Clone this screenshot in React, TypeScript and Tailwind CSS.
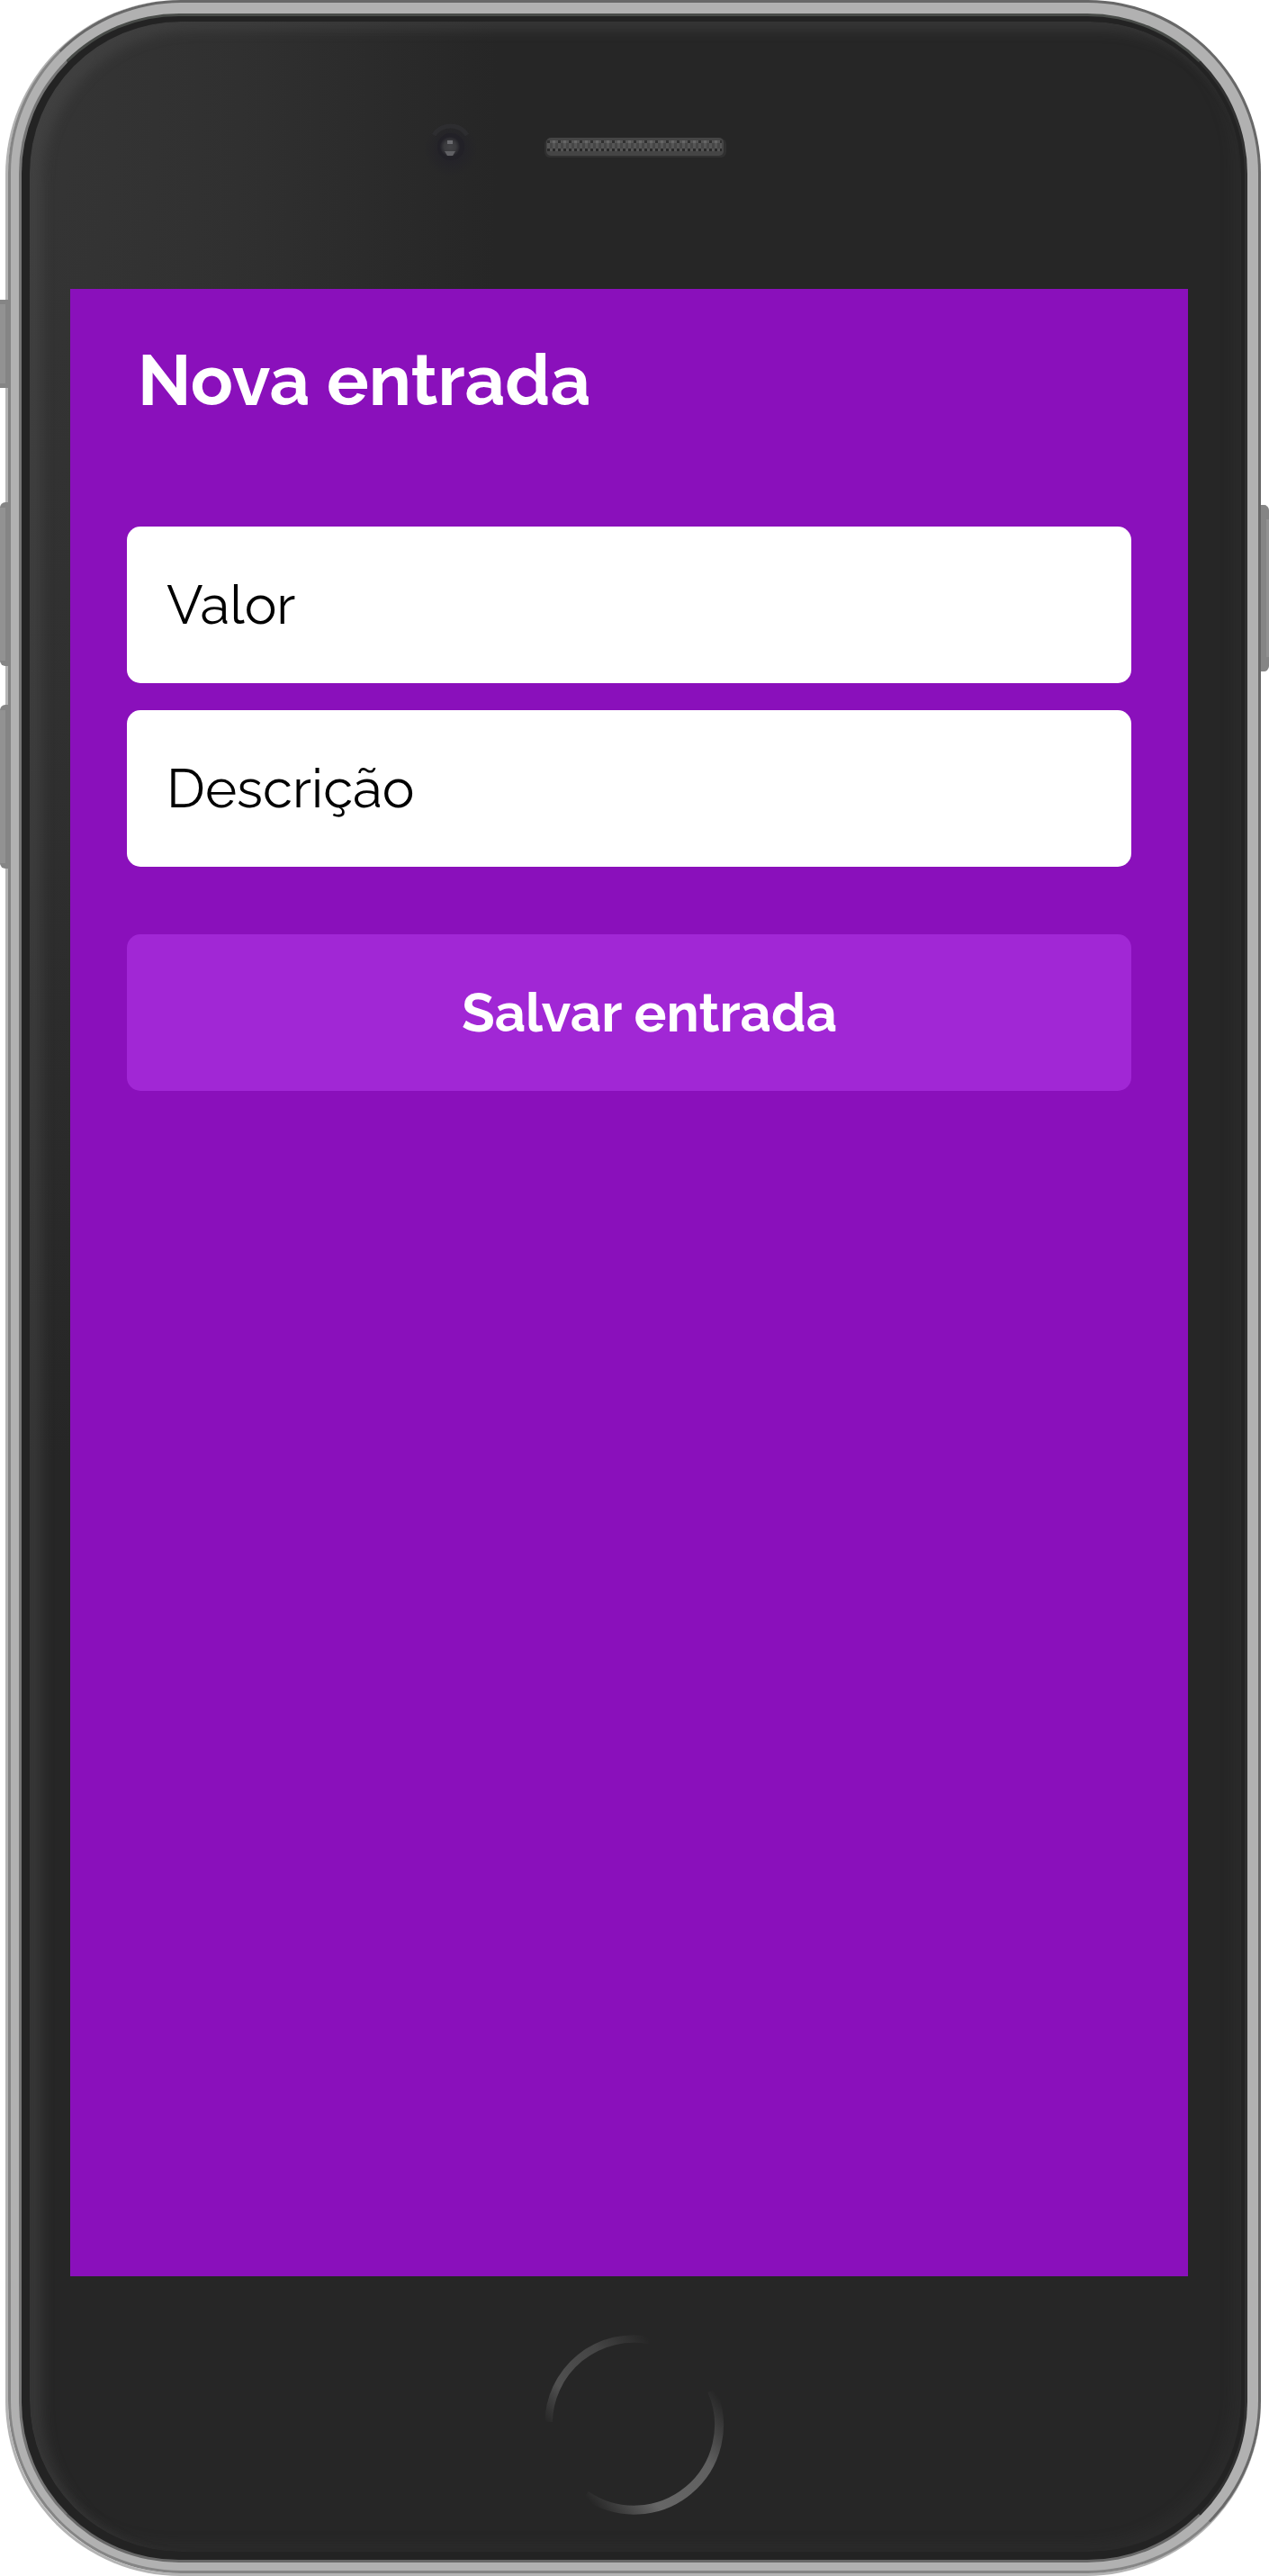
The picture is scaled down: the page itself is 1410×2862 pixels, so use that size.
import React from "react";

function SideButton({ className }: { className: string }) {
  return <div className={"w-[9px] border-[#858585] bg-[#929292] " + className} />;
}

function Camera() {
  return (
    <svg className="mt-[100px] shrink-0" width="66" height="72" viewBox="0 0 66 72">
      <defs>
        <radialGradient id="halo">
          <stop offset="0.35" stopColor="#222129" />
          <stop offset="1" stopColor="#222129" stopOpacity="0" />
        </radialGradient>
        <radialGradient id="lens">
          <stop offset="0" stopColor="#424245" />
          <stop offset="0.6" stopColor="#3a3a3d" />
          <stop offset="1" stopColor="#242329" />
        </radialGradient>
      </defs>
      <circle cx="34" cy="42" r="30" fill="url(#halo)" opacity="0.7" />
      <path d="M15 26 A22 22 0 0 1 52 26" fill="none" stroke="#303033" strokeWidth="5" opacity="0.7" />
      <circle cx="34" cy="39" r="15" fill="#222127" />
      <circle cx="33" cy="39" r="11" fill="url(#lens)" />
      <rect x="30" y="32" width="6" height="4" fill="#6c6c70" />
      <path d="M27 44 H39 L36 49 H30 Z" fill="#606064" />
    </svg>
  );
}

function Speaker() {
  return (
    <svg className="mt-[128px] shrink-0" width="202" height="24" viewBox="0 0 202 24">
      <defs>
        <pattern id="mesh" x="3" y="4" width="12" height="12" patternUnits="userSpaceOnUse">
          <rect width="12" height="12" fill="#555555" />
          <rect width="3" height="3" fill="#303030" />
          <rect x="6" width="3" height="3" fill="#666666" />
          <rect x="3" y="3" width="3" height="6" fill="#464646" />
          <rect x="9" y="3" width="3" height="6" fill="#464646" />
          <rect y="9" width="3" height="3" fill="#292929" />
          <rect x="6" y="9" width="3" height="3" fill="#292929" />
        </pattern>
      </defs>
      <rect x="0" y="2" width="202" height="21" rx="6" fill="#303030" />
      <rect x="2" y="1" width="197" height="20" rx="5" fill="#454545" />
      <rect x="3" y="4" width="194" height="12" fill="url(#mesh)" />
    </svg>
  );
}

function HomeButton() {
  return (
    <svg className="shrink-0" width="212" height="212" viewBox="0 0 212 212">
      <defs>
        <linearGradient id="upper" gradientUnits="userSpaceOnUse" x1="12" y1="108" x2="124" y2="13">
          <stop offset="0" stopColor="#262626" />
          <stop offset="0.25" stopColor="#505050" />
          <stop offset="0.65" stopColor="#454545" />
          <stop offset="1" stopColor="#262626" />
        </linearGradient>
        <linearGradient id="lower" gradientUnits="userSpaceOnUse" x1="53" y1="187" x2="196" y2="70">
          <stop offset="0" stopColor="#262626" />
          <stop offset="0.3" stopColor="#666666" />
          <stop offset="0.7" stopColor="#606060" />
          <stop offset="1" stopColor="#262626" />
        </linearGradient>
      </defs>
      <path d="M12.6 105 A94.500 94.500 0 0 1 124 14" fill="none" stroke="url(#upper)" strokeWidth="8.500" />
      <path d="M194 70 A94.500 94.500 0 0 1 54 186" fill="none" stroke="url(#lower)" strokeWidth="10" />
    </svg>
  );
}

function Field({ label, className }: { label: string; className: string }) {
  return (
    <div className="flex h-[174px] items-center rounded-[15px] bg-white">
      <span className={"whitespace-nowrap text-[60px] leading-none text-black " + className}>{label}</span>
    </div>
  );
}

function Screen() {
  return (
    <main className="ml-[45px] flex h-[2208px] w-[1242px] shrink-0 flex-col bg-[#8a10bb] px-[63px]">
      <h1 className="mt-[60px] h-[84px] whitespace-nowrap pl-[12px] text-[78px] leading-[84px] font-bold text-white">
        Nova entrada
      </h1>
      <div className="mt-[120px] flex flex-col gap-[30px]">
        <Field label="Valor" className="pl-[44px]" />
        <Field label="Descrição" className="pl-[44px]" />
      </div>
      <button className="mt-[75px] flex h-[174px] items-center rounded-[15px] bg-[#a127d5] pl-[372px] text-[60px] leading-none font-bold whitespace-nowrap text-white">
        Salvar entrada
      </button>
    </main>
  );
}

export default function App() {
  return (
    <div className="flex h-[2862px] w-[1410px] overflow-hidden bg-white font-[Raleway,Lato,sans-serif]">
      <div className="z-10 flex w-[9px] shrink-0 flex-col pt-[333px]">
        <SideButton className="h-[98px] border-y-[5px] border-r-[3px]" />
        <SideButton className="mt-[127px] h-[182px] rounded-l-[6px] border-y-[6px] border-r-[3px]" />
        <SideButton className="mt-[43px] h-[182px] rounded-l-[6px] border-y-[6px] border-r-[3px]" />
      </div>

      {/* Metal rim: highlight edge, dark edge, brushed band, inner bevel */}
      <div className="-ml-[3px] h-[2862px] w-[1395px] shrink-0 rounded-[194px] border-b-[3px] border-l-[3px] border-[#b4b4b4]">
        <div className="h-full rounded-[192px] border-[3px] border-t-[#686868] border-r-[#686868] border-b-[#858585] border-l-[#858585] bg-[#b1b1b1] pt-[12px] pr-[12px] pb-[9px] pl-[9px]">
          <div className="h-full rounded-[178px] border-[3px] border-t-[#484b48] border-r-[#303030] border-b-[#686868] border-l-[#757575] bg-[#232323] pt-[6px] pr-[4px] pb-[9px] pl-[9px]">
            <div className="flex h-full flex-col rounded-[168px] bg-[#262626] bg-[radial-gradient(ellipse_520px_1500px_at_0_100px,#353535_0%,#303030_45%,#262626_100%)] shadow-[inset_14px_10px_14px_rgba(90,90,90,0.32),inset_-10px_-10px_14px_rgba(70,70,70,0.16)]">
              <header className="flex h-[297px] shrink-0 items-start gap-[72px] pl-[434px]">
                <Camera />
                <Speaker />
              </header>
              <Screen />
              <footer className="flex pt-[57px] pl-[564px]">
                <HomeButton />
              </footer>
            </div>
          </div>
        </div>
      </div>

      <div className="flex w-[9px] shrink-0 flex-col pt-[561px]">
        <SideButton className="h-[185px] rounded-r-[6px] border-y-[16px] border-l-[6px]" />
      </div>
    </div>
  );
}
